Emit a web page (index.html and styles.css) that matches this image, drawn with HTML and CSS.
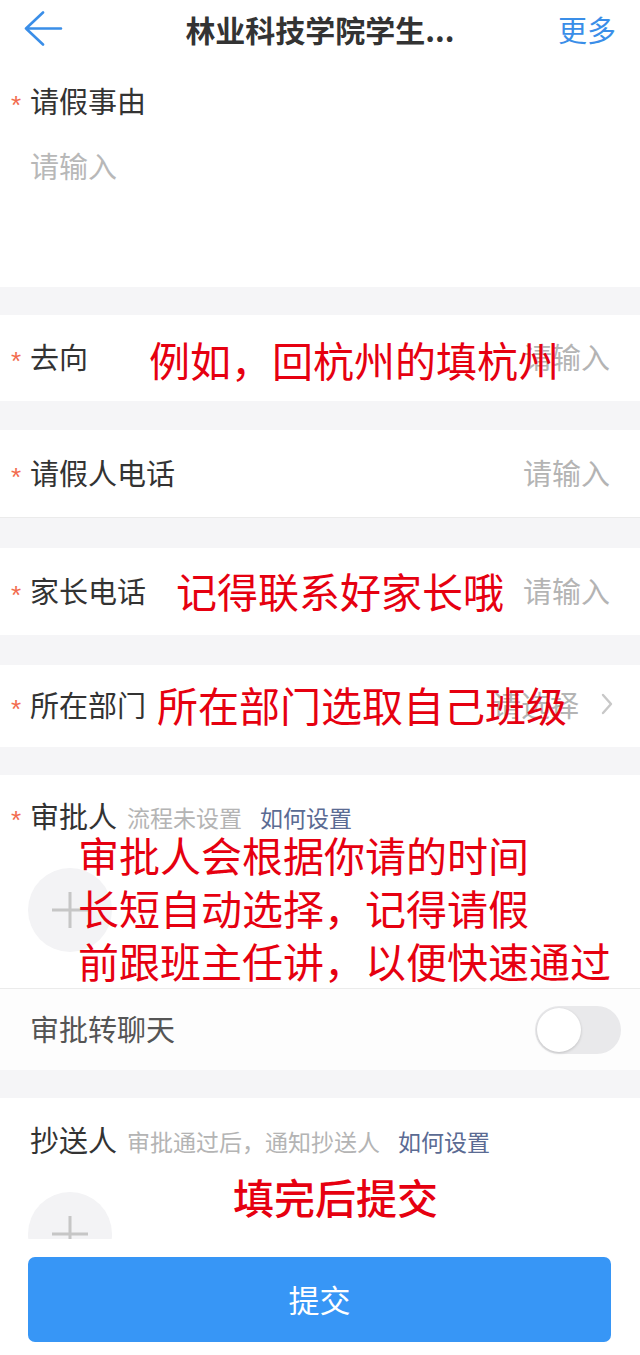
FILE: index.html
```html
<!DOCTYPE html>
<html>
<head>
    <meta charset="utf-8">
    <title>请假申请</title>
    <link rel="stylesheet" href="styles.css">
</head>
<body>
<div class="page">
    <div class="header">
        <div class="back">
            <svg width="40" height="40" viewBox="0 0 40 40">
                <path d="M19 1.5 L2 17.5 L19 33.5 M2 17.5 H37" fill="none" stroke="#3a8ee8" stroke-width="2.6" stroke-linecap="round" stroke-linejoin="round"/>
            </svg>
        </div>
        <div class="title">林业科技学院学生...</div>
        <div class="more">更多</div>
    </div>

    <div class="scroll">
        <div class="reason">
            <div class="label-line"><span class="req">*</span><span class="label">请假事由</span></div>
            <div class="area-ph">请输入</div>
        </div>

        <div class="row r-dest">
            <span class="req">*</span><span class="label">去向</span>
            <span class="ph">请输入</span>
        </div>

        <div class="row r-phone">
            <span class="req">*</span><span class="label">请假人电话</span>
            <span class="ph">请输入</span>
        </div>

        <div class="row r-parent">
            <span class="req">*</span><span class="label">家长电话</span>
            <span class="ph">请输入</span>
        </div>

        <div class="row r-dept">
            <span class="req">*</span><span class="label">所在部门</span>
            <span class="ph">请选择</span>
            <svg class="chevron" width="12" height="22" viewBox="0 0 12 22">
                <path d="M2 2 L10 11 L2 20" fill="none" stroke="#c8c8c8" stroke-width="2.4" stroke-linecap="round" stroke-linejoin="round"/>
            </svg>
        </div>

        <div class="approver">
            <div class="label-line">
                <span class="req">*</span><span class="label">审批人</span>
                <span class="sub">流程未设置</span>
                <span class="how">如何设置</span>
            </div>
            <div class="add">
                <svg width="36" height="36" viewBox="0 0 36 36">
                    <path d="M0 18 H36 M18 0 V36" stroke="#c6c6c6" stroke-width="3"/>
                </svg>
            </div>
        </div>

        <div class="row r-chat">
            <span class="label chat">审批转聊天</span>
            <div class="switch"><div class="knob"></div></div>
        </div>

        <div class="cc">
            <div class="label-line cc-line">
                <span class="label">抄送人</span>
                <span class="sub">审批通过后，通知抄送人</span>
                <span class="how">如何设置</span>
            </div>
            <div class="add">
                <svg width="36" height="36" viewBox="0 0 36 36">
                    <path d="M0 18 H36 M18 0 V36" stroke="#c6c6c6" stroke-width="3"/>
                </svg>
            </div>
        </div>
    </div>

    <div class="footer">
        <button class="submit">提交</button>
    </div>

    <!-- red notes written over the screenshot -->
    <div class="note n1">例如，回杭州的填杭州</div>
    <div class="note n2">记得联系好家长哦</div>
    <div class="note n3">所在部门选取自己班级</div>
    <div class="note n4">审批人会根据你请的时间<br>长短自动选择，记得请假<br>前跟班主任讲，以便快速通过</div>
    <div class="note n5">填完后提交</div>
</div>
</body>
</html>
```

FILE: styles.css
```css
body {
    margin: 0;
    font-family: "Noto Sans CJK SC", sans-serif;
    background: #fff;
}

.page {
    position: relative;
    width: 640px;
    height: 1355px;
    display: flex;
    flex-direction: column;
    overflow: hidden;
}

/* header */
.header {
    height: 61px;
    flex-shrink: 0;
    box-sizing: border-box;
    padding-bottom: 4px;
    display: grid;
    grid-template-columns: 1fr auto 1fr;
    align-items: center;
    background: #fff;
}

.back {
    display: flex;
    padding-left: 24px;
    margin-top: 4px;
}

.title {
    font-size: 30px;
    font-weight: 700;
    color: #333;
    line-height: 40px;
}

.more {
    justify-self: end;
    padding-right: 24px;
    font-size: 29px;
    line-height: 40px;
    color: #3a8ee8;
}

/* form */
.scroll {
    flex: 1;
    overflow: hidden;
    display: flex;
    flex-direction: column;
    background: #f5f5f7;
}

.label-line {
    display: flex;
    align-items: center;
}

.req {
    width: 20px;
    height: 26px;
    margin-top: 10px;
    padding-left: 1px;
    box-sizing: border-box;
    font-family: "Liberation Sans", sans-serif;
    font-size: 26px;
    line-height: 26px;
    color: #f26b4e;
}

.label {
    font-size: 29px;
    line-height: 40px;
    color: #333;
}

.reason {
    height: 226px;
    flex-shrink: 0;
    box-sizing: border-box;
    padding: 19px 0 0 10px;
    margin-bottom: 28px;
    background: #fff;
}

.area-ph {
    margin: 25px 0 0 20px;
    font-size: 29px;
    line-height: 40px;
    color: #b8b8b8;
}

.row {
    flex-shrink: 0;
    display: flex;
    align-items: center;
    box-sizing: border-box;
    padding: 0 30px 4px 10px;
    background: #fff;
}

.ph {
    margin-left: auto;
    font-size: 29px;
    line-height: 40px;
    color: #b4b4b4;
}

.r-dest {
    height: 86px;
    margin-bottom: 29px;
}

.r-phone {
    height: 88px;
    border-bottom: 1px solid #ebebeb;
    margin-bottom: 30px;
}

.r-parent {
    height: 87px;
    margin-bottom: 30px;
}

.r-dept {
    height: 82px;
    margin-bottom: 28px;
    padding-right: 27px;
}

.chevron {
    margin-left: 22px;
}

.sub {
    margin: 3px 0 0 10px;
    font-size: 23px;
    line-height: 32px;
    color: #b4b4b4;
}

.how {
    margin: 3px 0 0 18px;
    font-size: 23px;
    line-height: 32px;
    color: #5b6b93;
}

.approver {
    flex-shrink: 0;
    padding: 20px 0 36px 10px;
    border-bottom: 1px solid #ebebeb;
    background: #fff;
}

.add {
    width: 84px;
    height: 84px;
    margin: 33px 0 0 18px;
    border-radius: 50%;
    background: #f3f3f5;
    display: flex;
    align-items: center;
    justify-content: center;
}

.r-chat {
    height: 81px;
    margin-bottom: 28px;
    padding: 0 19px 0 30px;
    justify-content: space-between;
    background: #fdfdfd;
}

.label.chat {
    color: #555;
    margin-bottom: 4px;
}

.switch {
    width: 86px;
    height: 48px;
    border-radius: 24px;
    background: #e9e9eb;
    display: flex;
    align-items: center;
}

.knob {
    width: 44px;
    height: 44px;
    margin-left: 2px;
    border-radius: 50%;
    background: #fff;
    box-shadow: 0 1px 3px rgba(0, 0, 0, 0.18);
}

.cc {
    flex: 1;
    flex-shrink: 0;
    min-height: 200px;
    padding: 21px 0 0 10px;
    background: #fff;
}

.cc-line {
    padding-left: 20px;
}

/* footer */
.footer {
    height: 116px;
    flex-shrink: 0;
    box-sizing: border-box;
    padding: 18px 29px 13px 28px;
    background: #fff;
}

.submit {
    width: 100%;
    height: 85px;
    border: 0;
    border-radius: 7px;
    background: #3796f6;
    color: #fff;
    font-family: inherit;
    font-size: 31px;
    padding-bottom: 4px;
}

/* annotations */
.note {
    position: absolute;
    font-size: 41px;
    line-height: 41px;
    color: #e60010;
    white-space: nowrap;
}

.n1 { left: 149px; top: 339px; }
.n2 { left: 176px; top: 570px; }
.n3 { left: 157px; top: 684px; }
.n4 { left: 78px; top: 828px; line-height: 53px; }
.n5 { left: 233px; top: 1176px; font-weight: 500; }
```
